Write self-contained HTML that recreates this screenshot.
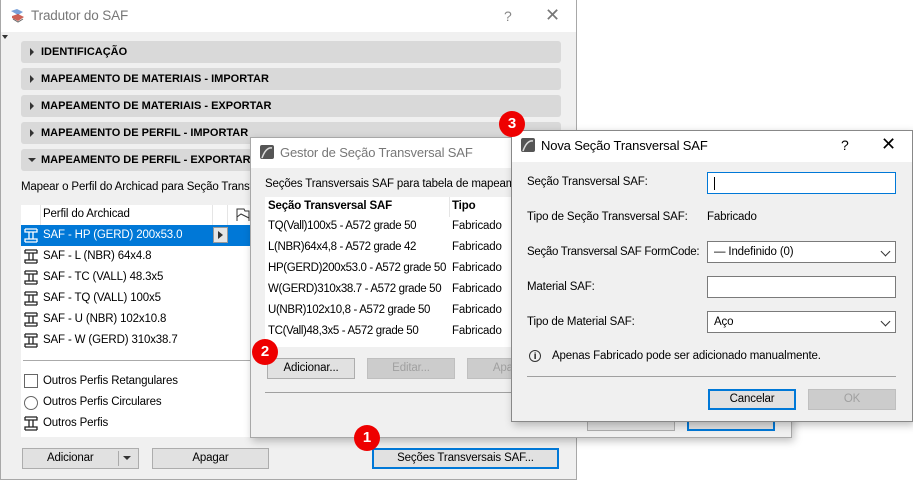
<!DOCTYPE html>
<html><head><meta charset="utf-8"><style>
*{box-sizing:border-box;margin:0;padding:0}
body{width:913px;height:475px;background:#fff;position:relative;overflow:hidden;font-family:"Liberation Sans",sans-serif;font-size:11.5px;letter-spacing:-0.15px;color:#000}
.a{position:absolute;white-space:nowrap}
.win{position:absolute;background:#f0f0f0;border:1px solid #a8a8a8}
.tb{position:absolute;left:0;top:0;right:0;background:#fff}
.sec{position:absolute;left:21px;width:540px;height:22px;background:#d9d9d9;border-radius:3px;font-weight:bold;font-size:11px;letter-spacing:0;line-height:22px;padding-left:20px}
.sec:before{content:"";position:absolute;left:9px;top:7px;border-left:4px solid #333;border-top:4px solid transparent;border-bottom:4px solid transparent}
.sec.o:before{left:7px;top:9px;border-top:4px solid #333;border-left:4px solid transparent;border-right:4px solid transparent;border-bottom:0}
.btn{position:absolute;height:21px;background:#e1e1e1;border:1px solid #adadad;text-align:center;line-height:19px;white-space:nowrap}
.dis{color:#a0a0a0;background:#cccccc;border-color:#bfbfbf}
.foc{border:2px solid #0078d7;line-height:17px}
.row{position:absolute;height:21px;line-height:21px;white-space:nowrap}
.badge{position:absolute;width:26px;height:26px;border-radius:50%;background:#e00;color:#fff;font-weight:bold;font-size:15px;text-align:center;line-height:26px}
.fld{position:absolute;left:707px;width:189px;height:22px;background:#fff;border:1px solid #7a7a7a;line-height:20px;padding-left:6px}
.chev{position:absolute;right:6px;top:6px;width:7px;height:7px;border-right:1.3px solid #333;border-bottom:1.3px solid #333;transform:rotate(45deg)}
.shadow{box-shadow:2px 3px 8px rgba(0,0,0,.25)}
</style></head><body>

<div class="win" style="left:0;top:0;width:577px;height:480px;border-top:0">
  <div class="tb" style="height:32px"></div>
</div>
<svg class="a" style="left:9px;top:7px" width="18" height="18"><path d="M2 4 L8 2 L14 5 L9 8Z" fill="#7aa0d8"/><path d="M3 9 L9 7 L15 10 L9 14 L3 11Z" fill="#c0392b" opacity=".8"/><path d="M4 12 L9 15 L14 12" stroke="#666" fill="none"/></svg>
<div class="a" style="left:31px;top:8px;font-size:13.5px;color:#777">Tradutor do SAF</div>
<div class="a" style="left:504px;top:8px;font-size:14px;color:#888">?</div>
<div class="a" style="left:545px;top:5px;font-size:18px;color:#777">✕</div>
<div class="a" style="left:2px;top:35px;border-top:4px solid #333;border-left:3px solid transparent;border-right:3px solid transparent"></div>

<div class="sec" style="top:41px">IDENTIFICAÇÃO</div>
<div class="sec" style="top:68px">MAPEAMENTO DE MATERIAIS - IMPORTAR</div>
<div class="sec" style="top:95px">MAPEAMENTO DE MATERIAIS - EXPORTAR</div>
<div class="sec" style="top:122px">MAPEAMENTO DE PERFIL - IMPORTAR</div>
<div class="sec o" style="top:149px">MAPEAMENTO DE PERFIL - EXPORTAR</div>
<div class="a" style="left:21px;top:181px">Mapear o Perfil do Archicad para Seção Transversal</div>

<div class="a" style="left:21px;top:205px;width:240px;height:232px;background:#fff"></div>
<div class="a" style="left:40px;top:205px;width:1px;height:20px;background:#e5e5e5"></div>
<div class="a" style="left:212px;top:205px;width:1px;height:20px;background:#e5e5e5"></div>
<div class="a" style="left:227px;top:205px;width:1px;height:20px;background:#e5e5e5"></div>
<div class="a" style="left:43px;top:208px">Perfil do Archicad</div>
<svg class="a" style="left:236px;top:208px" width="14" height="14"><path d="M1 13V1h7l1 2h4v10" fill="none" stroke="#333"/><path d="M1 9 L5 6 L13 10" fill="none" stroke="#333"/></svg>
<div class="a" style="left:21px;top:225px;width:240px;height:21px;background:#0078d7"></div>
<div class="a" style="left:213px;top:227px;width:15px;height:16px;background:#e5e5e5;border:1px solid #999"></div>
<div class="a" style="left:218px;top:231px;border-left:5px solid #333;border-top:4px solid transparent;border-bottom:4px solid transparent"></div>

<div class="row" style="left:43px;top:225px;color:#fff">SAF - HP (GERD) 200x53.0</div>
<div class="row" style="left:43px;top:246px">SAF - L (NBR) 64x4.8</div>
<div class="row" style="left:43px;top:267px">SAF - TC (VALL) 48.3x5</div>
<div class="row" style="left:43px;top:288px">SAF - TQ (VALL) 100x5</div>
<div class="row" style="left:43px;top:309px">SAF - U (NBR) 102x10.8</div>
<div class="row" style="left:43px;top:330px">SAF - W (GERD) 310x38.7</div>
<svg class="a" style="left:24px;top:228px" width="16" height="215">
<g fill="none" stroke-width="1.3">
<path d="M1 1h12M1 14h12M3 4h8M3 11h8M5 4v7M9 4v7M1 1v3h2M13 1v3h-2M1 14v-3h2M13 14v-3h-2" stroke="#fff"/>
<g stroke="#222"><path d="M1 22h12M1 35h12M3 25h8M3 32h8M5 25v7M9 25v7M1 22v3h2M13 22v3h-2M1 35v-3h2M13 35v-3h-2"/>
<path transform="translate(0,21)" d="M1 22h12M1 35h12M3 25h8M3 32h8M5 25v7M9 25v7M1 22v3h2M13 22v3h-2M1 35v-3h2M13 35v-3h-2"/>
<path transform="translate(0,42)" d="M1 22h12M1 35h12M3 25h8M3 32h8M5 25v7M9 25v7M1 22v3h2M13 22v3h-2M1 35v-3h2M13 35v-3h-2"/>
<path transform="translate(0,63)" d="M1 22h12M1 35h12M3 25h8M3 32h8M5 25v7M9 25v7M1 22v3h2M13 22v3h-2M1 35v-3h2M13 35v-3h-2"/>
<path transform="translate(0,84)" d="M1 22h12M1 35h12M3 25h8M3 32h8M5 25v7M9 25v7M1 22v3h2M13 22v3h-2M1 35v-3h2M13 35v-3h-2"/>
<path transform="translate(0,167)" d="M1 22h12M1 35h12M3 25h8M3 32h8M5 25v7M9 25v7M1 22v3h2M13 22v3h-2M1 35v-3h2M13 35v-3h-2"/>
</g></g></svg>
<div class="a" style="left:23px;top:360px;width:238px;height:1px;background:#aaa"></div>
<div class="a" style="left:24px;top:374px;width:14px;height:14px;border:1px solid #666;background:#fff"></div>
<div class="row" style="left:43px;top:371px">Outros Perfis Retangulares</div>
<div class="a" style="left:24px;top:396px;width:14px;height:14px;border:1px solid #666;border-radius:50%;background:#fff"></div>
<div class="row" style="left:43px;top:392px">Outros Perfis Circulares</div>
<div class="row" style="left:43px;top:413px">Outros Perfis</div>

<div class="btn" style="left:22px;top:448px;width:117px;text-align:left;padding-left:24px">Adicionar</div>
<div class="a" style="left:118px;top:451px;width:1px;height:15px;background:#aaa"></div>
<div class="a" style="left:123px;top:456px;border-top:4px solid #333;border-left:4px solid transparent;border-right:4px solid transparent"></div>
<div class="btn" style="left:152px;top:448px;width:117px">Apagar</div>
<div class="btn foc" style="left:372px;top:448px;width:187px">Seções Transversais SAF...</div>

<div class="win shadow" style="left:250px;top:137px;width:542px;height:301px">
  <div class="tb" style="height:30px"></div>
</div>
<svg class="a" style="left:260px;top:145px" width="14" height="14"><rect width="14" height="14" rx="2" fill="#555"/><path d="M2 13 Q6 2 12 3" stroke="#ddd" fill="none" stroke-width="1.5"/></svg>
<div class="a" style="left:280px;top:145px;font-size:13px;color:#777">Gestor de Seção Transversal SAF</div>
<div class="a" style="left:265px;top:178px">Seções Transversais SAF para tabela de mapeamento</div>
<div class="a" style="left:265px;top:197px;width:250px;height:150px;background:#fff"></div>
<div class="a" style="left:449px;top:197px;width:1px;height:20px;background:#e5e5e5"></div>
<div class="row" style="left:268px;top:196px;font-weight:bold">Seção Transversal SAF</div>
<div class="row" style="left:452px;top:196px;font-weight:bold">Tipo</div>
<div style="letter-spacing:-0.35px">
<div class="row" style="left:268px;top:216px">TQ(Vall)100x5 - A572 grade 50</div>
<div class="row" style="left:268px;top:237px">L(NBR)64x4,8 - A572 grade 42</div>
<div class="row" style="left:268px;top:258px">HP(GERD)200x53.0 - A572 grade 50</div>
<div class="row" style="left:268px;top:279px">W(GERD)310x38.7 - A572 grade 50</div>
<div class="row" style="left:268px;top:300px">U(NBR)102x10,8 - A572 grade 50</div>
<div class="row" style="left:268px;top:321px">TC(Vall)48,3x5 - A572 grade 50</div>
</div>
<div class="a" style="left:450px;top:216px;width:65px;height:126px;background:#fff"></div>
<div class="row" style="left:452px;top:216px">Fabricado</div>
<div class="row" style="left:452px;top:237px">Fabricado</div>
<div class="row" style="left:452px;top:258px">Fabricado</div>
<div class="row" style="left:452px;top:279px">Fabricado</div>
<div class="row" style="left:452px;top:300px">Fabricado</div>
<div class="row" style="left:452px;top:321px">Fabricado</div>
<div class="btn" style="left:267px;top:358px;width:88px">Adicionar...</div>
<div class="btn dis" style="left:367px;top:358px;width:88px">Editar...</div>
<div class="btn dis" style="left:467px;top:358px;width:88px">Apagar</div>
<div class="a" style="left:265px;top:392px;width:510px;height:1px;background:#a0a0a0"></div>
<div class="btn" style="left:587px;top:410px;width:88px"></div>
<div class="btn foc" style="left:687px;top:410px;width:88px"></div>

<div class="win shadow" style="left:511px;top:130px;width:402px;height:292px;border-color:#888">
  <div class="tb" style="height:31px"></div>
</div>
<svg class="a" style="left:521px;top:138px" width="14" height="14"><rect width="14" height="14" rx="2" fill="#555"/><path d="M2 13 Q6 2 12 3" stroke="#ddd" fill="none" stroke-width="1.5"/></svg>
<div class="a" style="left:541px;top:138px;font-size:13px">Nova Seção Transversal SAF</div>
<div class="a" style="left:841px;top:137px;font-size:14px">?</div>
<div class="a" style="left:881px;top:134px;font-size:18px">✕</div>
<div class="a" style="left:527px;top:176px">Seção Transversal SAF:</div>
<div class="fld" style="top:172px;border:1px solid #0078d7"><span style="display:inline-block;width:1px;height:13px;background:#000;margin-top:4px"></span></div>
<div class="a" style="left:527px;top:211px">Tipo de Seção Transversal SAF:</div>
<div class="a" style="left:707px;top:211px">Fabricado</div>
<div class="a" style="left:527px;top:246px;letter-spacing:-0.3px">Seção Transversal SAF FormCode:</div>
<div class="fld" style="top:241px">— Indefinido (0)<div class="chev"></div></div>
<div class="a" style="left:527px;top:281px">Material SAF:</div>
<div class="fld" style="top:276px"></div>
<div class="a" style="left:527px;top:316px">Tipo de Material SAF:</div>
<div class="fld" style="top:311px">Aço<div class="chev"></div></div>
<div class="a" style="left:529px;top:350px;width:12px;height:12px;border:1px solid #333;border-radius:50%;font-size:9px;text-align:center;line-height:10px;font-weight:bold">i</div>
<div class="a" style="left:552px;top:350px">Apenas Fabricado pode ser adicionado manualmente.</div>
<div class="a" style="left:527px;top:376px;width:369px;height:1px;background:#a0a0a0"></div>
<div class="btn foc" style="left:708px;top:389px;width:88px">Cancelar</div>
<div class="btn dis" style="left:808px;top:389px;width:88px">OK</div>

<div class="badge" style="left:354px;top:425px">1</div>
<div class="badge" style="left:252px;top:339px">2</div>
<div class="badge" style="left:499px;top:111px">3</div>
</body></html>
